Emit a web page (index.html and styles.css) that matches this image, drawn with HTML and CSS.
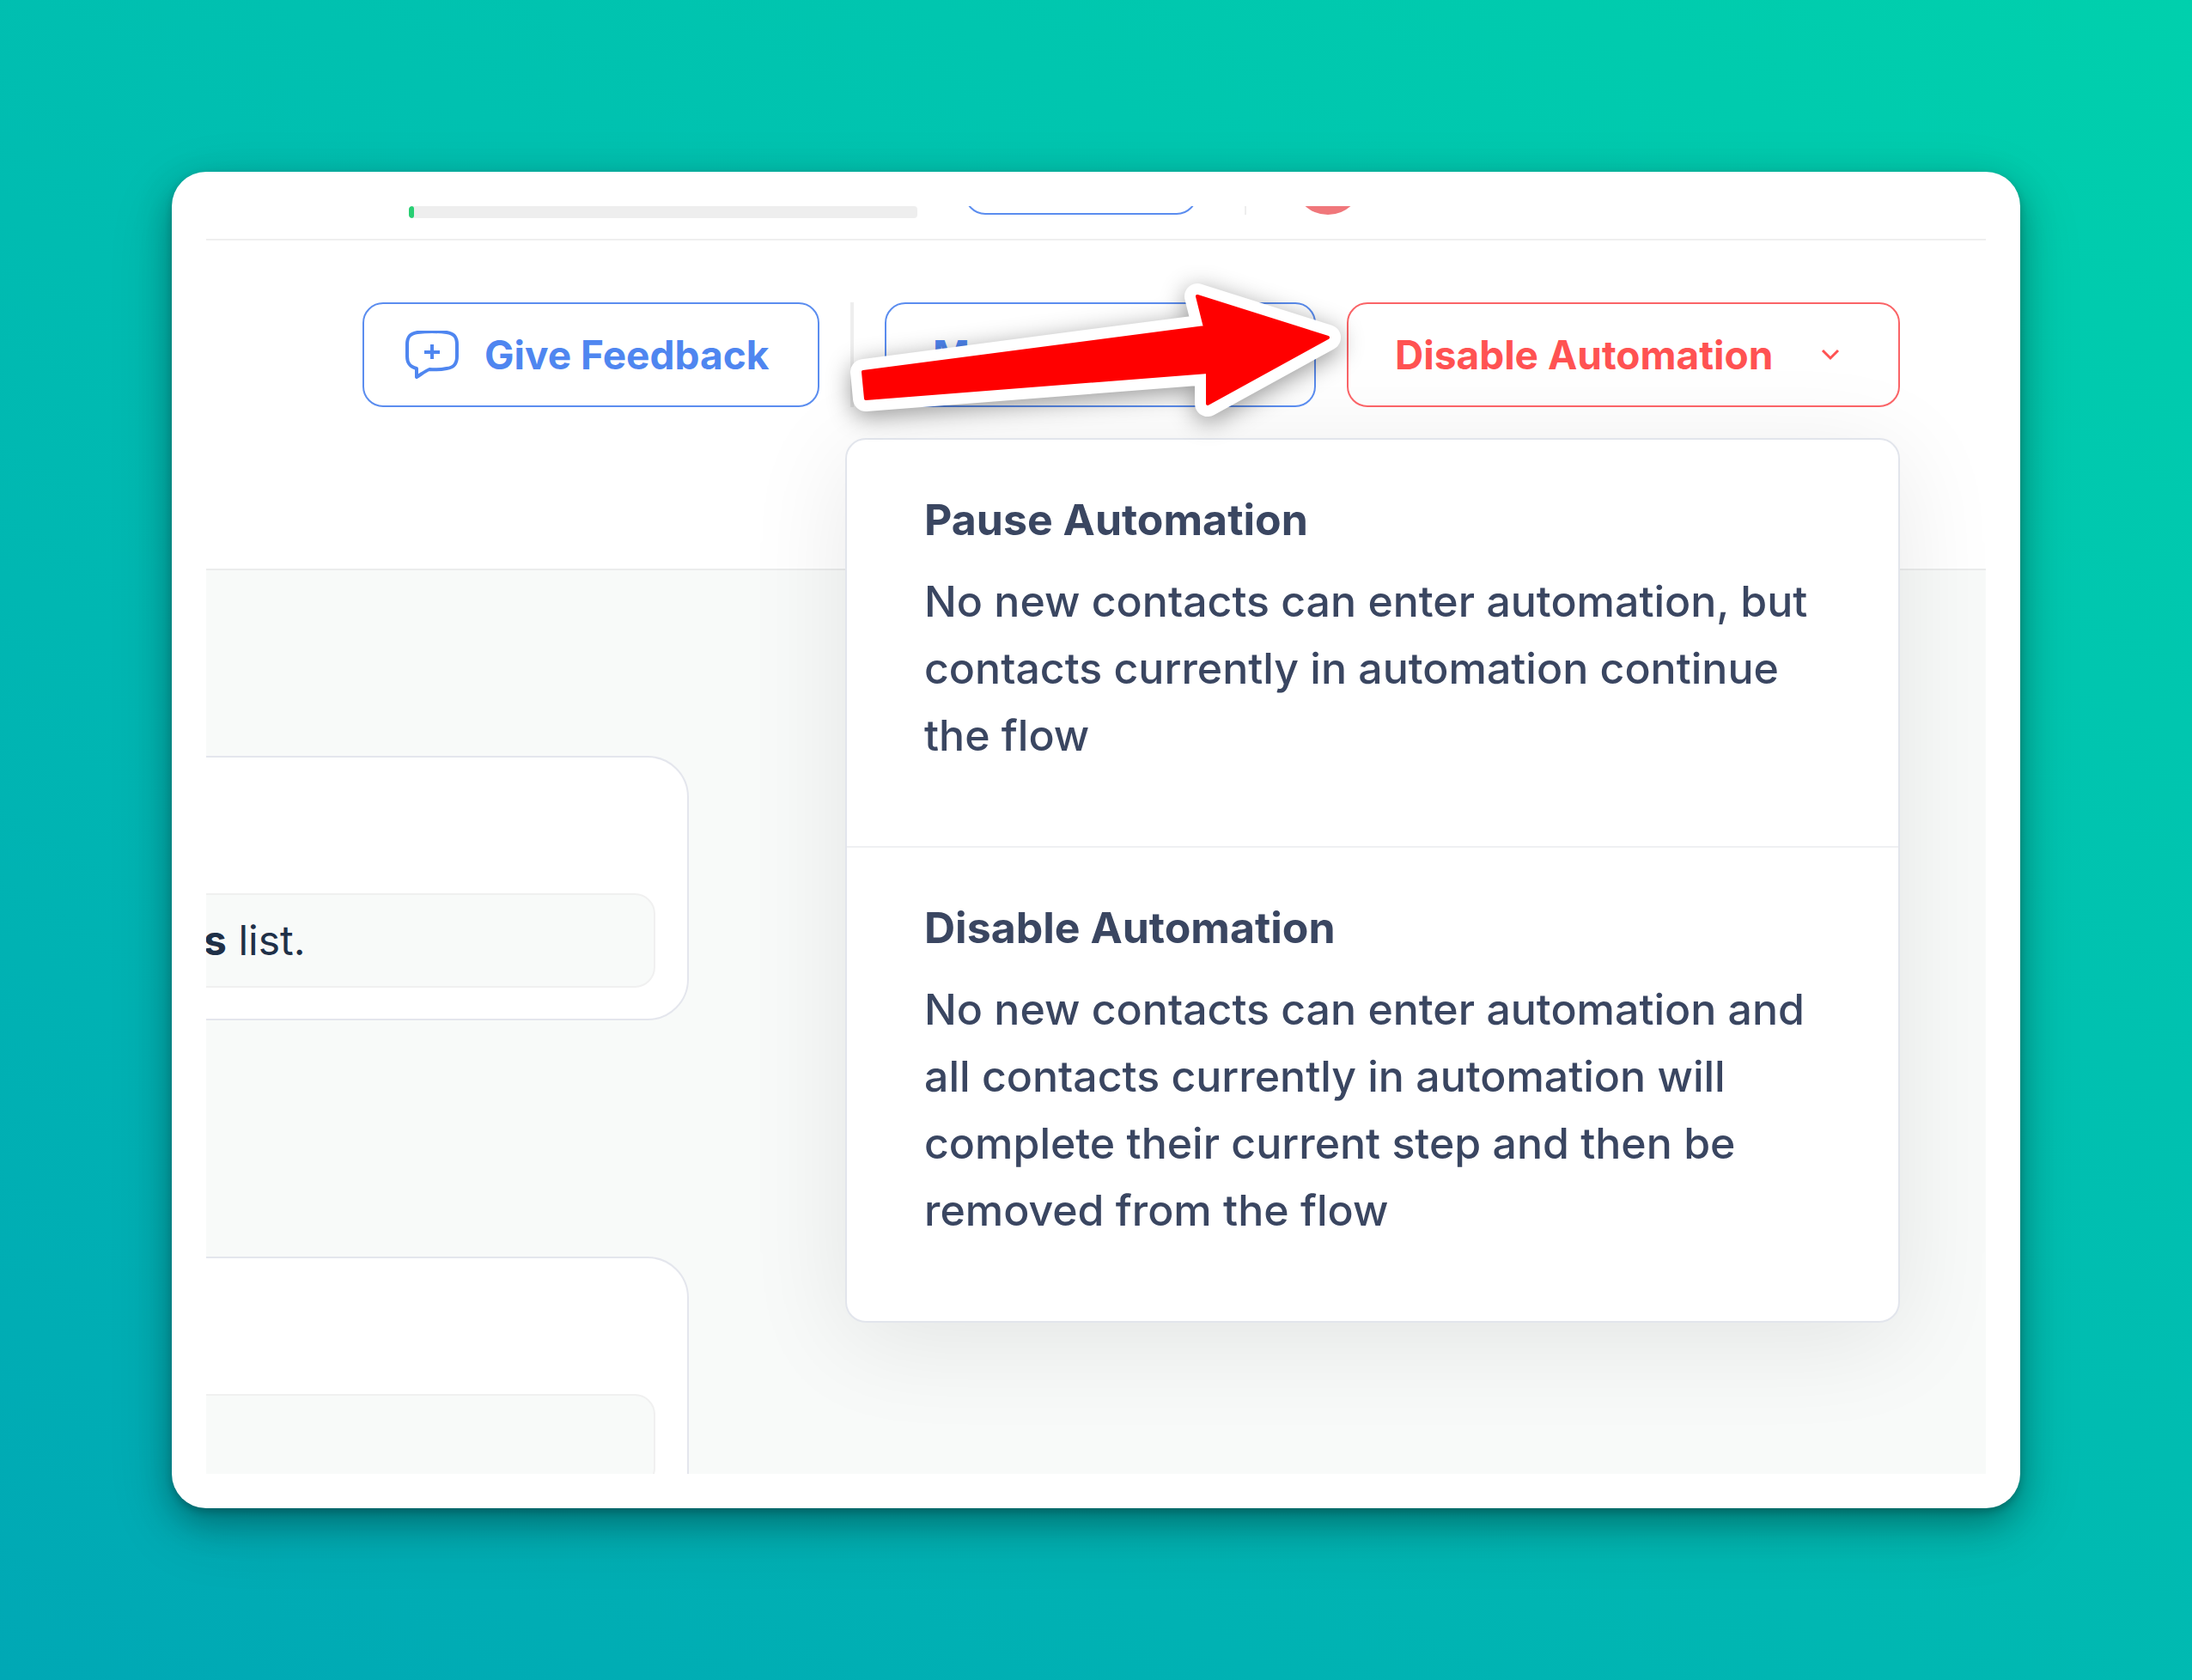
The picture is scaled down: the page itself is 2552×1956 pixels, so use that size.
FILE: index.html
```html
<!DOCTYPE html>
<html lang="en">
<head>
    <meta charset="utf-8">
    <title>Disable Automation</title>
    <link rel="stylesheet" href="styles.css">
</head>
<body>
    <div class="window">
        <div class="screen">
            <div class="topbar">
                <div class="progress"><div class="progress-fill"></div></div>
                <button class="btn btn-plan" type="button" aria-label="Plan"></button>
                <span class="topbar-divider"></span>
                <span class="avatar"></span>
            </div>

            <header class="toolbar">
                <button class="btn btn-feedback" type="button">
                    <svg class="icon-feedback" viewBox="0 0 62 56" aria-hidden="true">
                        <path d="M13 44 C5 42 2 38 2 30 V16 C2 7 6 3 14 2 Q31 0 48 2 C56 3 60 7 60 16 V30 C60 39 56 43 48 44 Q38 46 28 45 C23 47 18 51 13 54 Z"/>
                        <path d="M31 16 V33 M22 25 H40"/>
                    </svg>
                    Give Feedback
                </button>
                <span class="toolbar-divider"></span>
                <button class="btn btn-manage" type="button">Manage</button>
                <div class="dropdown">
                    <button class="btn btn-danger" type="button" aria-expanded="true">
                        Disable Automation
                        <svg class="icon-chevron" viewBox="0 0 22 14" aria-hidden="true">
                            <path d="M2 2 L11 11 L20 2"/>
                        </svg>
                    </button>
                    <div class="menu">
                        <div class="menu-item">
                            <h3>Pause Automation</h3>
                            <p>No new contacts can enter automation, but contacts currently in automation continue the flow</p>
                        </div>
                        <div class="menu-item">
                            <h3>Disable Automation</h3>
                            <p>No new contacts can enter automation and all contacts currently in automation will complete their current step and then be removed from the flow</p>
                        </div>
                    </div>
                </div>

                <!-- Pointer to the dropdown button -->
                <svg class="arrow" viewBox="0 0 600 190" aria-hidden="true">
                    <path class="arrow-outline" d="M37 153 L435 101 L426 65 L578 113 L438 190 L438 153 L40 184 Z"/>
                    <path class="arrow-body" d="M37 153 L435 101 L426 65 L578 113 L438 190 L438 153 L40 184 Z"/>
                </svg>
            </header>

            <main class="canvas">
                <div class="card">
                    <div class="card-text"><b>s</b> list.</div>
                </div>
                <div class="card">
                    <div class="card-text"></div>
                </div>
            </main>
        </div>
    </div>
</body>
</html>
```
FILE: styles.css
```css
* {
    box-sizing: border-box;
}
body {
    margin: 0;
    height: 100vh;
    padding: 200px;
    font-family: Inter, sans-serif;
    font-size: 48px;
    color: #1f3048;
    background: linear-gradient(30deg, #00a8b5, #00d0ad);
}
.window {
    height: 100%;
    padding: 40px;
    background: #fff;
    border-radius: 40px;
    box-shadow: 0 4px 8px rgba(0, 0, 0, 0.2), 0 16px 40px rgba(0, 0, 0, 0.3), 0 24px 80px rgba(0, 0, 0, 0.12);
}
.screen {
    display: flex;
    flex-direction: column;
    height: 100%;
    overflow: hidden;
}

/* Top bar, scrolled mostly out of view */
.topbar {
    display: flex;
    flex: none;
    align-items: flex-end;
    gap: 55px;
    height: 40px;
    padding: 0 0 28px 236px;
    border-bottom: 2px solid #efefef;
}
.progress {
    width: 592px;
    height: 14px;
    margin-bottom: -4px;
    border-radius: 4px;
    background: #eee;
    overflow: hidden;
}
.progress-fill {
    width: 1%;
    height: 100%;
    border-radius: 3px;
    background: #28cf73;
}
.topbar-divider {
    width: 2px;
    height: 122px;
    background: #eee;
}
.avatar {
    width: 80px;
    height: 80px;
    border-radius: 50%;
    background: #f0777b;
}

/* z-index keeps the menu shadow under the buttons */
.btn {
    position: relative;
    z-index: 1;
    display: flex;
    flex: none;
    align-items: center;
    height: 122px;
    padding: 0 54px;
    border: 2px solid #5b8def;
    border-radius: 24px;
    background: transparent;
    color: #4f86f0;
    font: 700 46px Inter, sans-serif;
    white-space: nowrap;
}
.btn-plan {
    width: 271px;
}

.toolbar {
    position: relative;
    display: flex;
    flex: none;
    justify-content: flex-end;
    gap: 36px;
    padding: 72px 100px 188px 0;
    border-bottom: 2px solid #ebecec;
}
.btn-feedback {
    gap: 30px;
    width: 532px;
    padding: 0 0 0 48px;
}
.icon-feedback {
    width: 62px;
    height: 56px;
    fill: none;
    stroke: #4f86f0;
    stroke-width: 4;
    stroke-linejoin: round;
}
.toolbar-divider {
    width: 4px;
    height: 122px;
    background: #eee;
}
.btn-manage {
    width: 502px;
}
.btn-danger {
    justify-content: space-between;
    width: 644px;
    padding: 0 68px 0 54px;
    border-color: #fa6467;
    color: #ff5252;
}
.icon-chevron {
    width: 22px;
    height: 14px;
    fill: none;
    stroke: #ff5252;
    stroke-width: 3;
}

.dropdown {
    position: relative;
}
.menu {
    position: absolute;
    top: calc(100% + 36px);
    right: 0;
    width: 1228px;
    border: 2px solid #e2e5ec;
    border-radius: 24px;
    background: #fff;
    color: #3a4661;
    box-shadow: 0 20px 120px rgba(0, 0, 0, 0.09);
}
.menu-item {
    padding: 54px 90px 90px;
}
.menu-item + .menu-item {
    border-top: 2px solid #eff0f2;
}
.menu h3,
.menu p {
    margin: 0;
    font-size: 50px;
    font-weight: 500;
    line-height: 78px;
}
.menu h3 {
    margin-bottom: 17px;
    font-weight: 700;
}

.arrow {
    position: absolute;
    z-index: 2;
    top: 0;
    right: 744px;
    width: 600px;
    height: 190px;
    overflow: visible;
    filter: drop-shadow(0 6px 14px rgba(0, 0, 0, 0.4));
}
.arrow path {
    stroke-linejoin: round;
}
.arrow-outline {
    fill: #fff;
    stroke: #fff;
    stroke-width: 30;
}
.arrow-body {
    fill: #f00;
    stroke: #f00;
    stroke-width: 4;
}

.canvas {
    flex: 1;
    min-height: 0;
    padding-top: 216px;
    background: #f8faf9;
}
.card {
    width: 662px;
    margin: 0 0 275px -100px;
    padding: 158px 37px 36px;
    border: 2px solid #e4e6ed;
    border-radius: 48px;
    background: #fff;
}
.card-text {
    height: 110px;
    padding-left: 56px;
    border: 2px solid #f0f0f0;
    border-radius: 24px;
    background: #f8faf9;
    line-height: 106px;
}
```
